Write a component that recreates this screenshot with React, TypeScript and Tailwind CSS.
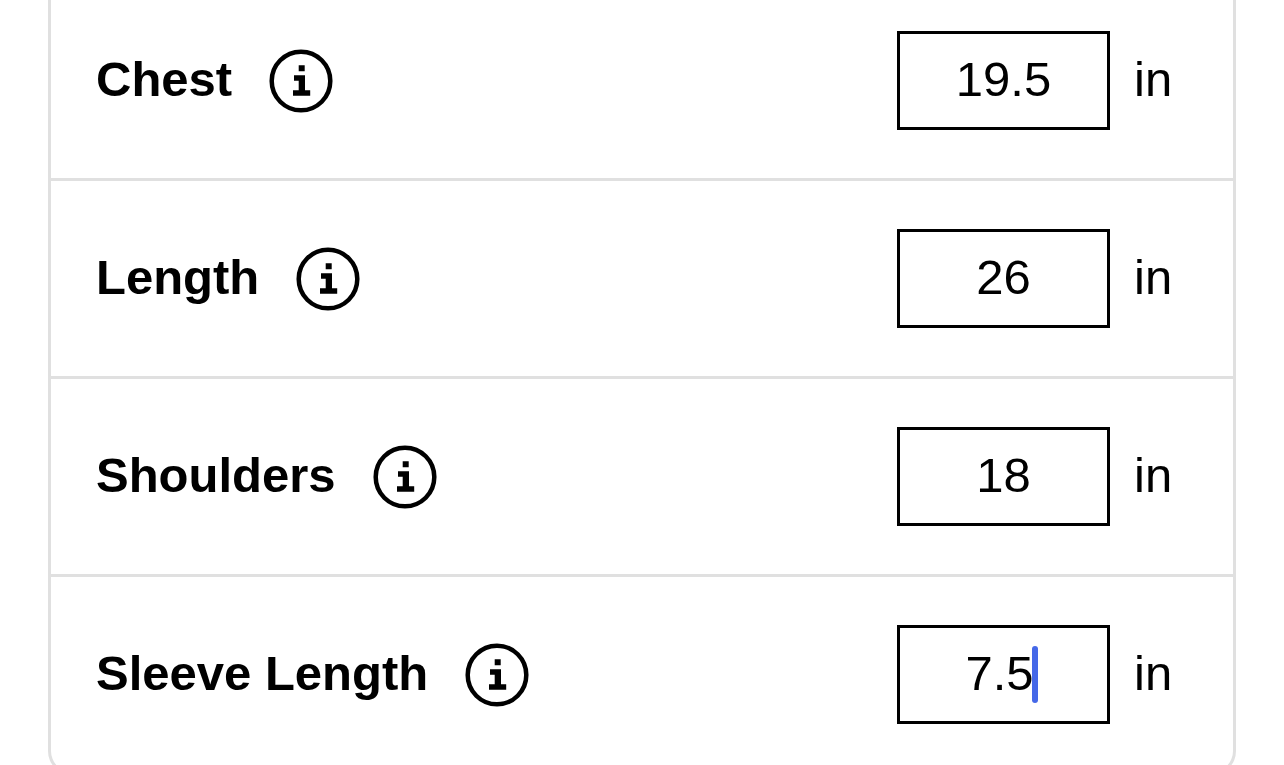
import { useState } from "react";

type Measurement = { id: string; label: string; value: string; active?: boolean };

const measurements: Measurement[] = [
  { id: "chest", label: "Chest", value: "19.5" },
  { id: "length", label: "Length", value: "26" },
  { id: "shoulders", label: "Shoulders", value: "18" },
  { id: "sleeve", label: "Sleeve Length", value: "7.5", active: true },
];

function InfoIcon() {
  return (
    <svg viewBox="0 0 64 64" className="block size-16" fill="none" aria-hidden="true">
      <circle cx="32" cy="32" r="29.3" stroke="black" strokeWidth="4.5" />
      <path d="M29.7 16.2h6v6h-6zM25 26.3h11v14.9h5.2v5.5H24v-5.5h5.7v-9.4H25z" fill="black" />
    </svg>
  );
}

function MeasurementRow({ id, label, value, active }: Measurement) {
  const [current, setCurrent] = useState(value);
  return (
    <div className="flex items-center justify-between border-b-3 border-[#e0e0e0] py-12 pr-[59px] pl-[45px] first:pt-[31px] last:border-b-0">
      <div className="flex items-center gap-[37px]">
        <label htmlFor={id} className="pb-1 font-bold">
          {label}
        </label>
        <button type="button" aria-label={`About ${label}`} className="rounded-full">
          <InfoIcon />
        </button>
      </div>
      <div className="flex items-center gap-6">
        <div className="relative">
          <input
            id={id}
            inputMode="decimal"
            value={current}
            onChange={(e) => setCurrent(e.target.value)}
            className={`block h-[99px] w-[213px] rounded-none border-3 border-black bg-white pb-1 text-center outline-none ${
              active ? "pr-2 caret-[#4169e1]" : ""
            }`}
          />
          {active && (
            <span className="pointer-events-none absolute top-[21px] left-[135px] h-[57px] w-1.5 rounded-full bg-[#4568e8]" />
          )}
        </div>
        <span className="w-10 pb-1">in</span>
      </div>
    </div>
  );
}

export default function App() {
  return (
    <main className="h-screen overflow-hidden bg-white px-12 font-['Liberation_Sans',Arial,sans-serif] text-[49px] leading-[60px] text-black">
      <form className="rounded-b-3xl border-x-3 border-b-3 border-[#e0e0e0]">
        {measurements.map((m) => (
          <MeasurementRow key={m.id} {...m} />
        ))}
      </form>
    </main>
  );
}
